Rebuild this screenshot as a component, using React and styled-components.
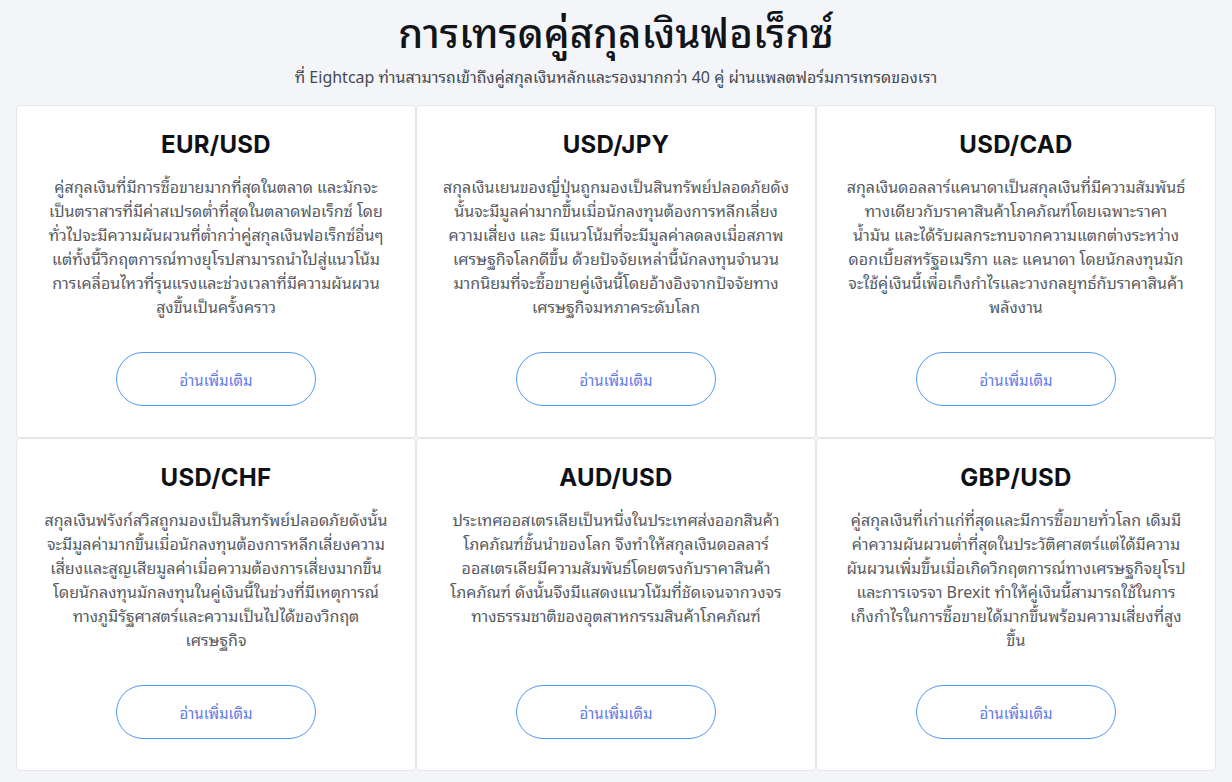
import React from "react";
import styled, { createGlobalStyle } from "styled-components";

const GlobalStyle = createGlobalStyle`
  html, body {
    margin: 0;
    padding: 0;
    background: #f4f5f9;
  }
  body {
    font-family: "Noto Sans Thai Looped", Tahoma, Loma, Garuda, Waree, "Noto Sans Thai", "Noto Sans", sans-serif;
    -webkit-font-smoothing: antialiased;
  }
`;

const Page = styled.main`
  padding: 0 16px 12px;
  display: flex;
  flex-direction: column;
  align-items: center;
`;

const Title = styled.h1`
  margin: 0;
  padding-top: 2px;
  font-size: 40px;
  line-height: 56px;
  font-weight: 500;
  color: #111418;
  text-align: center;
`;

const Subtitle = styled.p`
  margin: 6px 0 0;
  font-size: 16px;
  line-height: 24px;
  color: #464a50;
  text-align: center;
`;

const Grid = styled.section`
  margin-top: 17px;
  width: 100%;
  display: grid;
  grid-template-columns: repeat(3, 1fr);
`;

const Card = styled.article`
  background: #ffffff;
  border: 1px solid #e5e6ea;
  border-radius: 4px;
  padding: 23px 20px 31px;
  display: flex;
  flex-direction: column;
  align-items: center;
`;

const PairName = styled.h2`
  margin: 0;
  font-family: Inter, "Liberation Sans", sans-serif;
  font-size: 24px;
  line-height: 32px;
  font-weight: 700;
  color: #0e1116;
  letter-spacing: 0.3px;
`;

const Body = styled.p`
  margin: 13px 0 0;
  font-size: 16px;
  line-height: 24px;
  color: #575b61;
  text-align: center;
`;

const Line = styled.span`
  display: block;
  white-space: nowrap;
`;

const ReadMore = styled.a`
  margin-top: auto;
  width: 200px;
  height: 54px;
  box-sizing: border-box;
  border: 1px solid #4d9af3;
  border-radius: 27px;
  display: flex;
  align-items: center;
  justify-content: center;
  font-size: 15px;
  color: #5f7ce8;
  text-decoration: none;
  cursor: pointer;
`;

const Spacer = styled.div`
  height: 34px;
  flex: 0 0 34px;
`;

const pairs = [
  {
    name: "EUR/USD",
    lines: [
      "คู่สกุลเงินที่มีการซื้อขายมากที่สุดในตลาด และมักจะ",
      "เป็นตราสารที่มีค่าสเปรดต่ำที่สุดในตลาดฟอเร็กซ์ โดย",
      "ทั่วไปจะมีความผันผวนที่ต่ำกว่าคู่สกุลเงินฟอเร็กซ์อื่นๆ",
      "แต่ทั้งนี้วิกฤตการณ์ทางยุโรปสามารถนำไปสู่แนวโน้ม",
      "การเคลื่อนไหวที่รุนแรงและช่วงเวลาที่มีความผันผวน",
      "สูงขึ้นเป็นครั้งคราว",
    ],
  },
  {
    name: "USD/JPY",
    lines: [
      "สกุลเงินเยนของญี่ปุ่นถูกมองเป็นสินทรัพย์ปลอดภัยดัง",
      "นั้นจะมีมูลค่ามากขึ้นเมื่อนักลงทุนต้องการหลีกเลี่ยง",
      "ความเสี่ยง และ มีแนวโน้มที่จะมีมูลค่าลดลงเมื่อสภาพ",
      "เศรษฐกิจโลกดีขึ้น ด้วยปัจจัยเหล่านี้นักลงทุนจำนวน",
      "มากนิยมที่จะซื้อขายคู่เงินนี้โดยอ้างอิงจากปัจจัยทาง",
      "เศรษฐกิจมหภาคระดับโลก",
    ],
  },
  {
    name: "USD/CAD",
    lines: [
      "สกุลเงินดอลลาร์แคนาดาเป็นสกุลเงินที่มีความสัมพันธ์",
      "ทางเดียวกับราคาสินค้าโภคภัณฑ์โดยเฉพาะราคา",
      "น้ำมัน และได้รับผลกระทบจากความแตกต่างระหว่าง",
      "ดอกเบี้ยสหรัฐอเมริกา และ แคนาดา โดยนักลงทุนมัก",
      "จะใช้คู่เงินนี้เพื่อเก็งกำไรและวางกลยุทธ์กับราคาสินค้า",
      "พลังงาน",
    ],
  },
  {
    name: "USD/CHF",
    lines: [
      "สกุลเงินฟรังก์สวิสถูกมองเป็นสินทรัพย์ปลอดภัยดังนั้น",
      "จะมีมูลค่ามากขึ้นเมื่อนักลงทุนต้องการหลีกเลี่ยงความ",
      "เสี่ยงและสูญเสียมูลค่าเมื่อความต้องการเสี่ยงมากขึ้น",
      "โดยนักลงทุนมักลงทุนในคู่เงินนี้ในช่วงที่มีเหตุการณ์",
      "ทางภูมิรัฐศาสตร์และความเป็นไปได้ของวิกฤต",
      "เศรษฐกิจ",
    ],
  },
  {
    name: "AUD/USD",
    lines: [
      "ประเทศออสเตรเลียเป็นหนึ่งในประเทศส่งออกสินค้า",
      "โภคภัณฑ์ชั้นนำของโลก จึงทำให้สกุลเงินดอลลาร์",
      "ออสเตรเลียมีความสัมพันธ์โดยตรงกับราคาสินค้า",
      "โภคภัณฑ์ ดังนั้นจึงมีแสดงแนวโน้มที่ชัดเจนจากวงจร",
      "ทางธรรมชาติของอุตสาหกรรมสินค้าโภคภัณฑ์",
    ],
  },
  {
    name: "GBP/USD",
    lines: [
      "คู่สกุลเงินที่เก่าแก่ที่สุดและมีการซื้อขายทั่วโลก เดิมมี",
      "ค่าความผันผวนต่ำที่สุดในประวัติศาสตร์แต่ได้มีความ",
      "ผันผวนเพิ่มขึ้นเมื่อเกิดวิกฤตการณ์ทางเศรษฐกิจยุโรป",
      "และการเจรจา Brexit ทำให้คู่เงินนี้สามารถใช้ในการ",
      "เก็งกำไรในการซื้อขายได้มากขึ้นพร้อมความเสี่ยงที่สูง",
      "ขึ้น",
    ],
  },
];

export default function App() {
  return (
    <>
      <GlobalStyle />
      <Page>
        <Title>การเทรดคู่สกุลเงินฟอเร็กซ์</Title>
        <Subtitle>
          ที่ Eightcap ท่านสามารถเข้าถึงคู่สกุลเงินหลักและรองมากกว่า 40 คู่ ผ่านแพลตฟอร์มการเทรดของเรา
        </Subtitle>
        <Grid>
          {pairs.map((p) => (
            <Card key={p.name}>
              <PairName>{p.name}</PairName>
              <Body>
                {p.lines.map((l, i) => (
                  <Line key={i}>{l}</Line>
                ))}
              </Body>
              <Spacer />
              <ReadMore>อ่านเพิ่มเติม</ReadMore>
            </Card>
          ))}
        </Grid>
      </Page>
    </>
  );
}
